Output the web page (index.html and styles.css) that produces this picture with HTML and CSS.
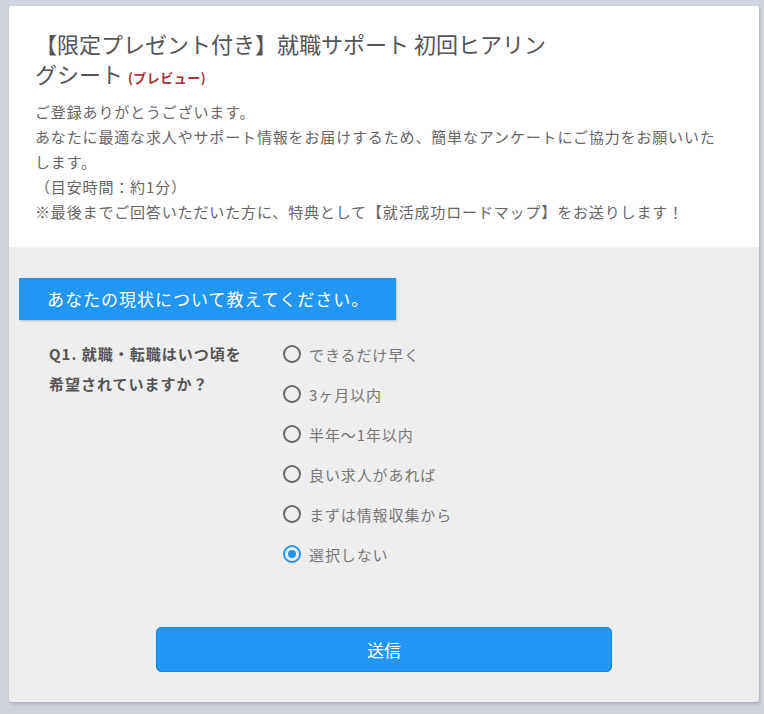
FILE: index.html
```html
<!DOCTYPE html>
<html lang="ja">
<head>
<meta charset="utf-8">
<title>就職サポート 初回ヒアリングシート</title>
<link rel="stylesheet" href="styles.css">
</head>
<body>
<div class="card">
  <header class="head">
    <h1 class="title">【限定プレゼント付き】就職サポート 初回ヒアリングシート <span class="preview">(プレビュー)</span></h1>
    <p class="desc">ご登録ありがとうございます。<br>あなたに最適な求人やサポート情報をお届けするため、簡単なアンケートにご協力をお願いいたします。<br>（目安時間：約1分）<br>※最後までご回答いただいた方に、特典として【就活成功ロードマップ】をお送りします！</p>
  </header>
  <section class="body">
    <div class="section-bar">あなたの現状について教えてください。</div>
    <div class="question">
      <div class="q-label">Q1. 就職・転職はいつ頃を希望されていますか？</div>
      <div class="options">
        <label class="opt"><span class="radio"></span><span class="opt-text">できるだけ早く</span></label>
        <label class="opt"><span class="radio"></span><span class="opt-text">3ヶ月以内</span></label>
        <label class="opt"><span class="radio"></span><span class="opt-text">半年〜1年以内</span></label>
        <label class="opt"><span class="radio"></span><span class="opt-text">良い求人があれば</span></label>
        <label class="opt"><span class="radio"></span><span class="opt-text">まずは情報収集から</span></label>
        <label class="opt"><span class="radio checked"></span><span class="opt-text">選択しない</span></label>
      </div>
    </div>
    <div class="actions">
      <button class="submit" type="button">送信</button>
    </div>
  </section>
</div>
</body>
</html>
```

FILE: styles.css
```css
html, body {
  margin: 0;
  padding: 0;
}
body {
  background: #cfd3dc;
  font-family: "Noto Sans CJK JP", "Noto Sans", sans-serif;
  padding: 6px 5px 0 9px;
  min-height: 714px;
  box-sizing: border-box;
}
.card {
  width: 750px;
  background: #eeeeee;
  border-radius: 3px;
  box-shadow: 1px 2px 3px rgba(0,0,0,0.18);
  overflow: hidden;
}
.head {
  background: #ffffff;
  padding: 22px 26px 23px 26px;
}
.title {
  margin: 0;
  width: 530px;
  font-size: 22px;
  font-weight: 400;
  line-height: 30px;
  color: #555555;
}
.preview {
  font-size: 13px;
  font-weight: 700;
  line-height: 1;
  letter-spacing: 0.5px;
  color: #a8323a;
}
.desc {
  margin: 11px 0 0 0;
  max-width: 690px;
  font-size: 15px;
  line-height: 25px;
  letter-spacing: 0.85px;
  color: #666666;
}
.body {
  padding: 31px 0 30px 0;
}
.section-bar {
  margin-left: 10px;
  width: 349px;
  height: 42px;
  line-height: 42px;
  padding-left: 28px;
  background: #2196f3;
  color: #ffffff;
  font-size: 17px;
  letter-spacing: 1px;
  box-shadow: 1px 1px 2px rgba(0,0,0,0.2);
}
.question {
  display: flex;
  margin-top: 19px;
  padding-left: 40px;
}
.q-label {
  width: 198px;
  margin-right: 36px;
  font-size: 15px;
  font-weight: 700;
  line-height: 30px;
  letter-spacing: 1px;
  color: #555555;
}
.options {
  display: flex;
  flex-direction: column;
}
.opt {
  display: flex;
  align-items: center;
  height: 40px;
  margin-top: -5px;
  margin-bottom: 5px;
}
.radio {
  width: 14px;
  height: 14px;
  border: 2px solid #666666;
  border-radius: 50%;
  box-sizing: content-box;
  position: relative;
  flex: none;
}
.radio.checked {
  border-color: #2196f3;
}
.radio.checked::after {
  content: "";
  position: absolute;
  left: 3px;
  top: 3px;
  width: 8px;
  height: 8px;
  border-radius: 50%;
  background: #2196f3;
}
.opt-text {
  margin-left: 8px;
  font-size: 15px;
  letter-spacing: 0.9px;
  color: #777777;
}
.actions {
  display: flex;
  justify-content: center;
  margin-top: 48px;
}
.submit {
  width: 456px;
  height: 45px;
  background: #2196f3;
  border: 1px solid #1a87dd;
  border-radius: 5px;
  color: #ffffff;
  font-family: "Noto Sans CJK JP", "Noto Sans", sans-serif;
  font-size: 17px;
  padding: 0;
}
```
